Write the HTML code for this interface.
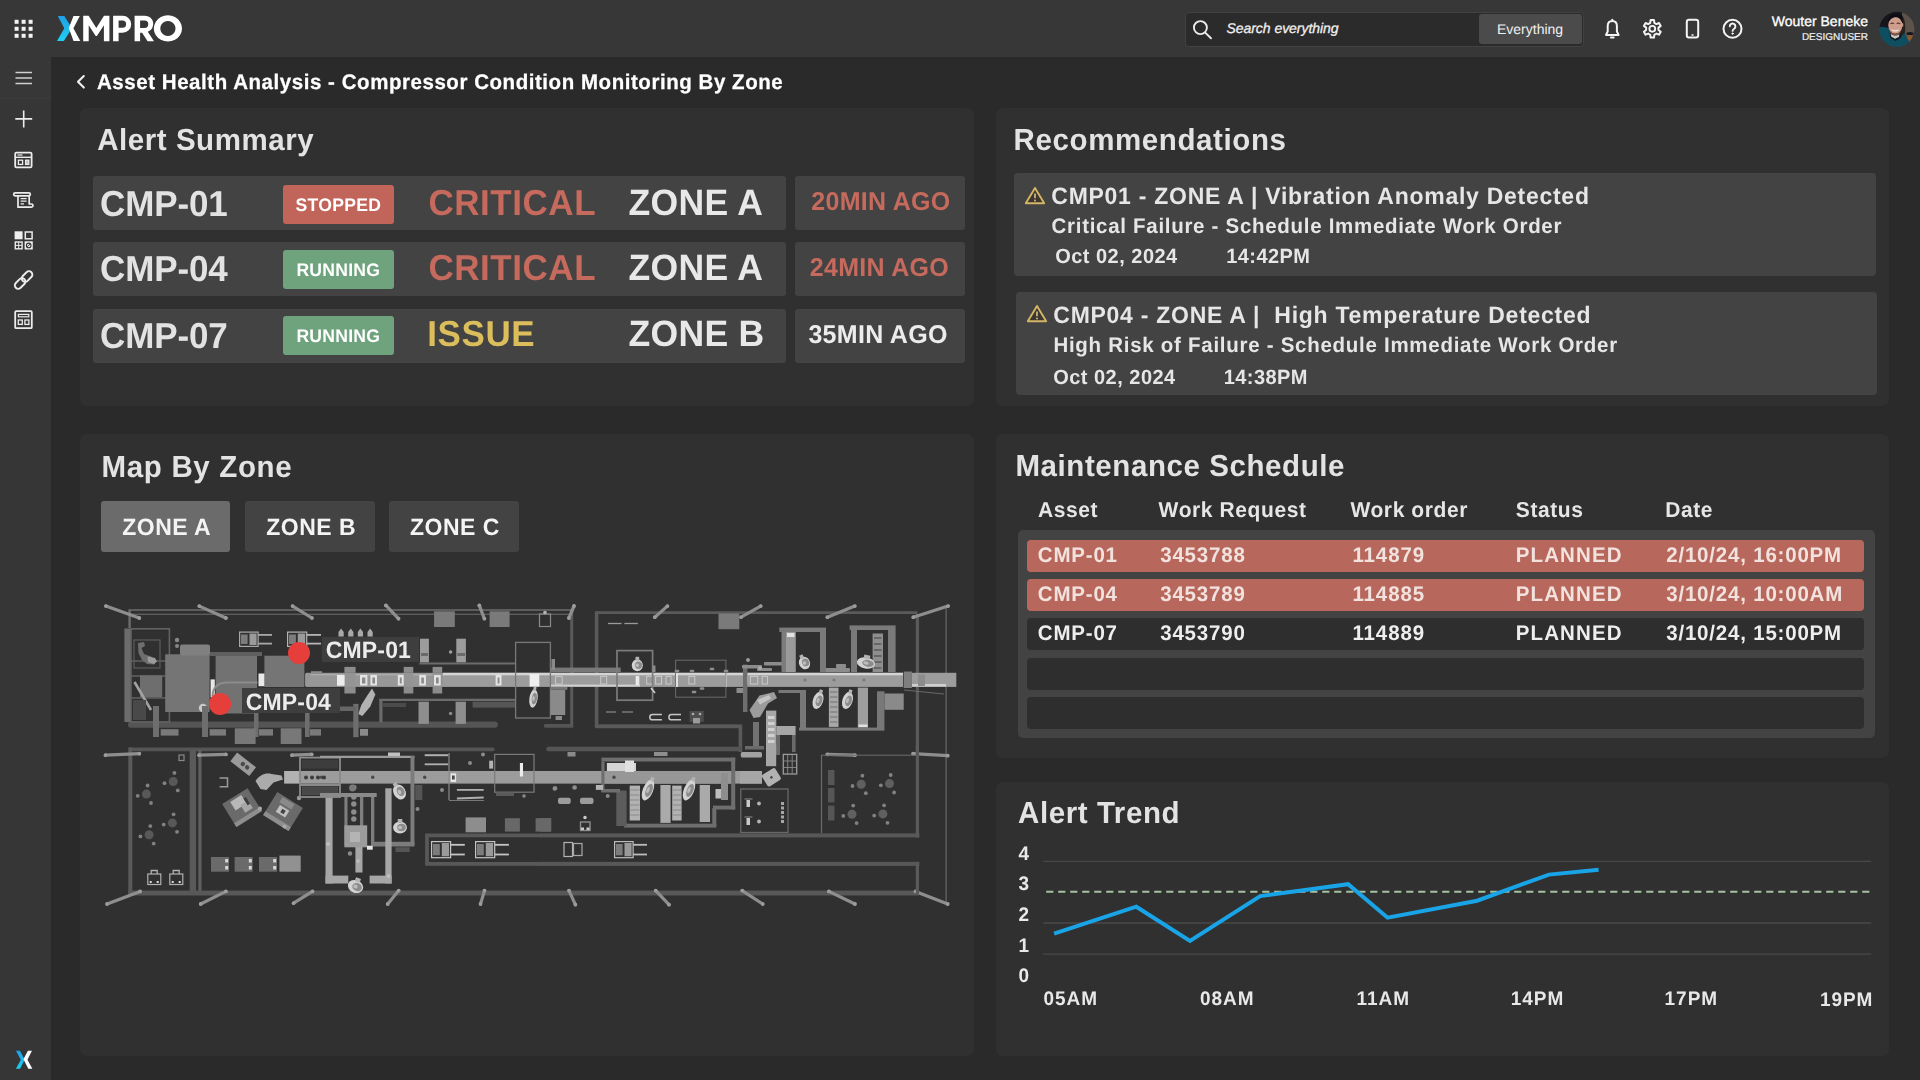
<!DOCTYPE html>
<html lang="en">
<head>
<meta charset="utf-8">
<title>Asset Health Analysis - Compressor Condition Monitoring By Zone</title>
<style>
*{box-sizing:border-box;margin:0;padding:0}
html,body{width:1920px;height:1080px;overflow:hidden;background:#2a2a2a}
body{font-family:"Liberation Sans",sans-serif;color:#e6e6e6;position:relative}
.abs{position:absolute}
.t{position:absolute;white-space:pre;line-height:1;transform:scaleY(1.03);transform-origin:0 85%;text-rendering:geometricPrecision}
.b{font-weight:700}
#topbar .t,#topbar{transform:none}
#topbar{left:0;top:0;width:1920px;height:57px;background:#373737}
#sidebar{left:0;top:57px;width:51px;height:1023px;background:#363636}
.panel{position:absolute;background:#303030;border-radius:7px}
</style>
</head>
<body>
<!-- TOPBAR -->
<div id="topbar" class="abs">
<!-- app grid -->
<svg class="abs" style="left:14px;top:19px" width="20" height="20" viewBox="0 0 20 20" fill="#f2f2f2">
<rect x=".6" y=".8" width="4" height="4"/><rect x="7.6" y=".8" width="4" height="4"/><rect x="14.6" y=".8" width="4" height="4"/>
<rect x=".6" y="7.8" width="4" height="4"/><rect x="7.6" y="7.8" width="4" height="4"/><rect x="14.6" y="7.8" width="4" height="4"/>
<rect x=".6" y="14.8" width="4" height="4"/><rect x="7.6" y="14.8" width="4" height="4"/><rect x="14.6" y="14.8" width="4" height="4"/>
</svg>
<!-- logo -->
<svg class="abs" style="left:56px;top:14px" width="130" height="30" viewBox="0 0 130 30">
<defs><linearGradient id="xg" x1="0" y1="0" x2="0" y2="1"><stop offset="0" stop-color="#1e9fe8"/><stop offset="1" stop-color="#1fd0f2"/></linearGradient></defs>
<path d="M1.8 1.9h6.500L16 14.200 7.800 27h-6.800L8.300 14.300z" fill="url(#xg)"/>
<path d="M23.800 1.900h-6.300L12.800 14.100 17.500 27h6.800L17.400 14.200z" fill="#fff"/>
<path d="M27.2 27.2V1.7h5.4l7.7 12.3 7.7-12.3h5.4v25.5h-5.5V11.2l-7 10.9h-1.2l-7-10.9v16z" fill="#fff"/>
<path fill-rule="evenodd" d="M57.1 27.2V1.7h9.6a8.5 8.5 0 0 1 0 17h-4.1v8.5zM62.6 6.6v7.2h3.9a3.6 3.6 0 0 0 0-7.2z" fill="#fff"/>
<path fill-rule="evenodd" d="M78.6 27.2V1.7h10.3a8.3 8.3 0 0 1 2.9 16.1l6.2 9.4h-6.4l-5.5-8.5h-2v8.5zM84.1 6.6v7.3h4.5a3.65 3.65 0 0 0 0-7.3z" fill="#fff"/>
<path fill-rule="evenodd" d="M111.9 1.3a14.1 13.15 0 1 0 .01 0zM111.9 6.9a7.6 7.55 0 1 1-.01 0z" fill="#fff"/>
</svg>
<!-- search -->
<div class="abs" style="left:1185px;top:11.5px;width:398.5px;height:35px;background:#2b2b2b;border:1px solid #424242;border-radius:4px"></div>
<svg class="abs" style="left:1190px;top:17px" width="26" height="26" viewBox="0 0 26 26" fill="none" stroke="#ececec" stroke-width="1.9" stroke-linecap="round"><circle cx="10.4" cy="10.6" r="6.5"/><path d="M15.2 15.6L21 21.3"/></svg>
<div class="t" style="left:1226.5px;top:20.500px;font-size:14px;font-style:italic;color:#f0f0f0;letter-spacing:-.05px;-webkit-text-stroke:.3px #f0f0f0">Search everything</div>
<div class="abs" style="left:1478.5px;top:14px;width:103.5px;height:30px;background:#4b4b4b;border-radius:3px"></div>
<div class="t" style="left:1497px;top:21.5px;font-size:14px;color:#f0f0f0">Everything</div>
<!-- bell -->
<svg class="abs" style="left:1595px;top:8px" width="160" height="42" viewBox="1595 8 160 42" fill="none" stroke="#f4f4f4" stroke-width="2" stroke-linejoin="round" stroke-linecap="round">
<path d="M1612.3 20.9c-3 0-4.600 2.300-4.600 5.200v5.400l-1.700 3.400h12.600l-1.700-3.400v-5.400c0-2.900-1.600-5.200-4.600-5.200z"/><path d="M1612.300 19.600v1" stroke-width="1.800"/><path d="M1611 37.500h2.600" stroke-width="2.200"/>
<path d="M1650.25 22.84L1650.60 20.06L1654.00 20.06L1654.35 22.84L1656.43 24.05L1659.02 22.96L1660.72 25.90L1658.48 27.60L1658.48 30.00L1660.72 31.70L1659.02 34.64L1656.43 33.55L1654.35 34.76L1654.00 37.54L1650.60 37.54L1650.25 34.76L1648.17 33.55L1645.58 34.64L1643.88 31.70L1646.12 30.00L1646.12 27.60L1643.88 25.90L1645.58 22.96L1648.17 24.05z" stroke-width="2"/><circle cx="1652.3" cy="28.8" r="2.900" stroke-width="1.900"/>
<rect x="1686.800" y="19.800" width="11.400" height="17.600" rx="2.200"/><path d="M1692 35h1" stroke-width="1.500"/>
<circle cx="1732.500" cy="28.800" r="9"/><path d="M1729.800 26.300a2.800 2.800 0 1 1 4.300 2.400c-1 .7-1.500 1.100-1.500 2.200" stroke-width="1.900"/><circle cx="1732.600" cy="33.600" r=".7" fill="#f4f4f4" stroke-width="1"/>
</svg>
<!-- user -->
<div class="t" style="right:52px;top:14px;font-size:14px;color:#fff;-webkit-text-stroke:.3px #fff">Wouter Beneke</div>
<div class="t" style="right:52px;top:32.5px;font-size:10px;color:#f0f0f0;-webkit-text-stroke:.2px #f0f0f0">DESIGNUSER</div>
<svg class="abs" style="left:1878px;top:11px" width="38" height="37" viewBox="0 0 38 37"><defs><clipPath id="av"><circle cx="18.9" cy="18.3" r="17.5"/></clipPath><filter id="bl" x="-20%" y="-20%" width="140%" height="140%"><feGaussianBlur stdDeviation=".7"/></filter></defs>
<g clip-path="url(#av)"><g filter="url(#bl)"><rect x="-2" y="-2" width="42" height="41" fill="#15171a"/><path d="M24 -2h16v41H24z" fill="#5d534c"/><path d="M24 4c4 6 4 14 2 22l-4 2z" fill="#26221f"/><ellipse cx="32" cy="28" rx="3.2" ry="4" fill="#8a5a2c"/><ellipse cx="32" cy="22.5" rx="3.6" ry="1.6" fill="#15171a"/>
<path d="M-2 16.5c5-.8 9-.4 12.5.4l2 7 8 4.5 6-6.5 5 9 1 9H-2z" fill="#0d5061"/>
<path d="M11.5 22l6 6 6.5-5.5-1 4-5.5 3.5-5-3z" fill="#0a1a22"/>
<path d="M12.5 22.5c2 2 6.5 2.6 9 .4l-.6 3.2-4 1.6-3.6-2z" fill="#cfc4be"/>
<ellipse cx="17.3" cy="14.2" rx="7" ry="8.8" fill="#cf9d8b"/><ellipse cx="24.3" cy="14" rx="1.1" ry="2" fill="#c99684"/>
<path d="M9.6 13.5c-.8-9 5-11.500 9-11.200 4.500 .3 7 3.500 6 10.200-1.500-5-4-6.300-7-6.300s-6.500 2-8 7.300z" fill="#101114"/>
<path d="M12.500 12.800c1.200-.8 2.600-.8 3.600-.2M18.600 12.600c1-.6 2.400-.6 3.600 .2" stroke="#5a3a2e" stroke-width="1.100" fill="none"/>
<path d="M13.300 18c2.200 1.600 5.800 1.600 8 0-.4 3.400-7.600 3.400-8 0z" fill="#f0e6e2"/>
<path d="M11 18c.8 5 4 6.600 6.300 6.600s5.600-1.600 6.400-6.600c-1 3.600-3.600 4.400-6.400 4.400s-5.300-.8-6.300-4.400z" fill="#7a5448"/>
</g></g></svg>
</div>
<!-- SIDEBAR -->
<div id="sidebar" class="abs">
<div class="abs" style="left:0;top:0;width:51px;height:42px;background:#373737;border-bottom:1px solid #3c3c3c"></div>
<svg class="abs" style="left:0;top:0" width="51" height="300" viewBox="0 57 51 300" fill="none" stroke="#ececec" stroke-width="1.5">
<!-- hamburger -->
<path d="M15.5 72.6H32M15.5 78H32M15.5 83.4H32" stroke="#cfcfcf"/>
<!-- plus -->
<path d="M15.3 118.9H32.2M23.7 110.4V127.4" stroke-width="1.6"/>
<!-- dashboard -->
<rect x="15.2" y="152.6" width="16.4" height="14.8" rx="1.2" stroke-width="1.8"/><path d="M15.2 157.3H31.8" stroke-width="1.4"/><path d="M17.5 155h5" stroke-width="1.2"/><rect x="18.4" y="160.2" width="4.2" height="4.2" stroke-width="1.3"/><rect x="25.6" y="160.2" width="3.2" height="4.2" stroke-width="1.3" fill="#bbb"/>
<!-- scroll -->
<path d="M15.2 192.8h13.6a1.5 1.5 0 0 1 0 3h-1.6M18 195.8V207.2H31.4a1.6 1.6 0 0 0 0-3.2H29.2V195.8M15.2 192.8a1.5 1.5 0 0 0 0 3H27.2" stroke-width="1.7" stroke-linejoin="round"/><path d="M20.6 198.6h6M20.6 201.2h6M20.6 203.8h3.4" stroke-width="1.3"/>
<!-- 4 squares -->
<rect x="14.6" y="231.3" width="8" height="8" fill="#efefef" stroke="none"/><rect x="25.3" y="232" width="6.8" height="6.8" stroke-width="1.5"/><rect x="15.3" y="242" width="6.8" height="6.8" stroke-width="1.4"/><path d="M18.7 242v6.8M15.3 245.4h6.8" stroke-width="1"/><rect x="24.6" y="241.3" width="8.2" height="8.2" fill="#efefef" stroke="none"/><circle cx="28.7" cy="245.4" r="2.3" stroke="#363636" stroke-width="1.1"/><path d="M27.2 246.9l3-3" stroke="#363636" stroke-width="1"/>
<!-- link -->
<g transform="rotate(-45 23.6 280)" stroke-width="1.9"><rect x="12.6" y="276.6" width="12.2" height="6.8" rx="3.4"/><rect x="22.4" y="276.6" width="12.2" height="6.8" rx="3.4"/></g>
<!-- widget -->
<rect x="15.2" y="311.2" width="16.6" height="17" rx="1" stroke-width="1.8"/><rect x="18.4" y="314.4" width="10.4" height="2.4" stroke-width="1.2"/><rect x="18.3" y="320" width="4" height="4.4" stroke-width="1.3"/><rect x="24.9" y="320" width="4" height="4.4" stroke-width="1.3"/>
</svg>
<!-- bottom X -->
<svg class="abs" style="left:13.500px;top:991px" width="21.400" height="23.500" viewBox="0 0 20 22">
<path d="M1.8 2.6h3.8l4.4 8.4-4.4 8.4H1.8l4.6-8.4z" fill="url(#xg)"/><path d="M16.8 2.6H13l-4.2 7.9 .3 .5 4.3 8.4h3.8l-4.6-8.4z" fill="#fff"/></svg>
</div>
<!-- TITLE -->
<svg class="abs" style="left:74px;top:73px" width="14" height="18" viewBox="0 0 14 18" fill="none" stroke="#f0f0f0" stroke-width="2.1" stroke-linecap="round" stroke-linejoin="round"><path d="M9.800 3L4 8.800l5.800 5.800"/></svg>
<div class="t b" id="title" style="left:97px;top:73px;font-size:20.5px;letter-spacing:.545px;color:#fff;-webkit-text-stroke:.25px #fff">Asset Health Analysis - Compressor Condition Monitoring By Zone</div>
<!-- PANELS -->
<div class="panel" style="left:80px;top:108px;width:894px;height:298px"></div>
<div class="panel" style="left:996px;top:108px;width:893px;height:298px"></div>
<div class="panel" style="left:80px;top:434px;width:894px;height:622px"></div>
<div class="panel" style="left:996px;top:434px;width:893px;height:323.5px"></div>
<div class="panel" style="left:996px;top:782px;width:893px;height:274px"></div>
<!-- ALERT SUMMARY -->
<div class="t " style="left:97.2px;top:126px;font-size:29.5px;font-weight:700;color:#e3e3e3;letter-spacing:0.55px;">Alert Summary</div>
<div class="abs" style="left:92.5px;top:176px;width:693.7px;height:54px;background:#434343;border-radius:3px;"></div>
<div class="abs" style="left:795.4px;top:176px;width:169.2px;height:54px;background:#434343;border-radius:3px;"></div>
<div class="t " style="left:100.1px;top:187px;font-size:35px;font-weight:700;color:#e2e2e2;letter-spacing:-0.15px;">CMP-01</div>
<div class="abs" style="left:282.5px;top:185px;width:111.7px;height:39.4px;background:#c1655a;border-radius:3px;"></div>
<div class="t" style="left:282.5px;width:111.7px;text-align:center;top:197px;font-size:17.6px;font-weight:700;color:#fff;letter-spacing:.25px">STOPPED</div>
<div class="t " style="left:428.4px;top:186px;font-size:35px;font-weight:700;color:#c56a5d;letter-spacing:0.55px;">CRITICAL</div>
<div class="t " style="left:628.6px;top:186px;font-size:35.6px;font-weight:700;color:#e8e8e8;letter-spacing:0.25px;">ZONE A</div>
<div class="t " style="left:811.3px;top:190px;font-size:25px;font-weight:700;color:#c56a5d;letter-spacing:0.3px;">20MIN AGO</div>
<div class="abs" style="left:92.5px;top:242.2px;width:693.7px;height:54px;background:#434343;border-radius:3px;"></div>
<div class="abs" style="left:795.4px;top:242.2px;width:169.2px;height:54px;background:#434343;border-radius:3px;"></div>
<div class="t " style="left:100.1px;top:252px;font-size:35px;font-weight:700;color:#e2e2e2;letter-spacing:-0.15px;">CMP-04</div>
<div class="abs" style="left:282.5px;top:249.6px;width:111.7px;height:39.4px;background:#6ea37e;border-radius:3px;"></div>
<div class="t" style="left:282.5px;width:111.7px;text-align:center;top:262px;font-size:17.6px;font-weight:700;color:#fff;letter-spacing:.25px">RUNNING</div>
<div class="t " style="left:428.4px;top:251px;font-size:35px;font-weight:700;color:#c56a5d;letter-spacing:0.55px;">CRITICAL</div>
<div class="t " style="left:628.6px;top:251px;font-size:35.6px;font-weight:700;color:#e8e8e8;letter-spacing:0.25px;">ZONE A</div>
<div class="t " style="left:809.8px;top:256px;font-size:25px;font-weight:700;color:#c56a5d;letter-spacing:0.3px;">24MIN AGO</div>
<div class="abs" style="left:92.5px;top:308.6px;width:693.7px;height:54px;background:#434343;border-radius:3px;"></div>
<div class="abs" style="left:795.4px;top:308.6px;width:169.2px;height:54px;background:#434343;border-radius:3px;"></div>
<div class="t " style="left:100.1px;top:319px;font-size:35px;font-weight:700;color:#e2e2e2;letter-spacing:-0.15px;">CMP-07</div>
<div class="abs" style="left:282.5px;top:315.6px;width:111.7px;height:39.4px;background:#6ea37e;border-radius:3px;"></div>
<div class="t" style="left:282.5px;width:111.7px;text-align:center;top:328px;font-size:17.6px;font-weight:700;color:#fff;letter-spacing:.25px">RUNNING</div>
<div class="t " style="left:427.2px;top:317px;font-size:35px;font-weight:700;color:#dcbd5c;letter-spacing:0.6px;">ISSUE</div>
<div class="t " style="left:628.6px;top:317px;font-size:35.6px;font-weight:700;color:#e8e8e8;letter-spacing:0.25px;">ZONE B</div>
<div class="t " style="left:808.4px;top:323px;font-size:25px;font-weight:700;color:#ececec;letter-spacing:0.3px;">35MIN AGO</div>
<!-- RECOMMENDATIONS -->
<div class="t " style="left:1013.6px;top:126px;font-size:29.5px;font-weight:700;color:#e3e3e3;letter-spacing:0.6px;">Recommendations</div>
<div class="abs" style="left:1013.8px;top:172.5px;width:862.2px;height:103.2px;background:#434343;border-radius:4px;"></div>
<svg class="abs" style="left:1023.7px;top:186.2px" width="22" height="19" viewBox="0 0 22 19" fill="none"><path d="M11 1.9L20.2 17.2H1.8z" stroke="#d3b566" stroke-width="1.9" stroke-linejoin="round" fill="#3d372f"/><path d="M11 7.6v4.600" stroke="#d9c58e" stroke-width="1.600"/><circle cx="11" cy="14.500" r=".9" fill="#d9c58e"/></svg>
<div class="t " style="left:1051.3px;top:185px;font-size:23px;font-weight:700;color:#e6e6e6;letter-spacing:0.73px;">CMP01 - ZONE A | Vibration Anomaly Detected</div>
<div class="t " style="left:1051.6px;top:217px;font-size:20.5px;font-weight:700;color:#e6e6e6;letter-spacing:0.7px;">Critical Failure - Schedule Immediate Work Order</div>
<div class="t " style="left:1055.2px;top:247px;font-size:20px;font-weight:700;color:#e6e6e6;letter-spacing:0.48px;">Oct 02, 2024</div>
<div class="t " style="left:1226.3px;top:247px;font-size:20px;font-weight:700;color:#e6e6e6;letter-spacing:0.4px;">14:42PM</div>
<div class="abs" style="left:1016.3px;top:291.8px;width:861.2px;height:102.8px;background:#434343;border-radius:4px;"></div>
<svg class="abs" style="left:1025.8px;top:304.4px" width="22" height="19" viewBox="0 0 22 19" fill="none"><path d="M11 1.9L20.2 17.2H1.8z" stroke="#d3b566" stroke-width="1.9" stroke-linejoin="round" fill="#3d372f"/><path d="M11 7.6v4.600" stroke="#d9c58e" stroke-width="1.600"/><circle cx="11" cy="14.500" r=".9" fill="#d9c58e"/></svg>
<div class="t " style="left:1053.3px;top:304px;font-size:23px;font-weight:700;color:#e6e6e6;letter-spacing:0.73px;">CMP04 - ZONE A |  High Temperature Detected</div>
<div class="t " style="left:1053.4px;top:336px;font-size:20.5px;font-weight:700;color:#e6e6e6;letter-spacing:0.72px;">High Risk of Failure - Schedule Immediate Work Order</div>
<div class="t " style="left:1053.2px;top:368px;font-size:20px;font-weight:700;color:#e6e6e6;letter-spacing:0.48px;">Oct 02, 2024</div>
<div class="t " style="left:1223.8px;top:368px;font-size:20px;font-weight:700;color:#e6e6e6;letter-spacing:0.4px;">14:38PM</div>
<!-- MAP BY ZONE -->
<div class="t " style="left:101.6px;top:453px;font-size:29.5px;font-weight:700;color:#e3e3e3;letter-spacing:0.65px;">Map By Zone</div>
<div class="abs" style="left:100.8px;top:501.3px;width:129.7px;height:51.2px;background:#6b6b6b;border-radius:3px;"></div>
<div class="t " style="left:122.2px;top:516px;font-size:23px;font-weight:700;color:#f4f4f4;letter-spacing:0.5px;">ZONE A</div>
<div class="abs" style="left:245px;top:501.3px;width:129.5px;height:51.2px;background:#434343;border-radius:3px;"></div>
<div class="t " style="left:266.2px;top:516px;font-size:23px;font-weight:700;color:#f4f4f4;letter-spacing:0.5px;">ZONE B</div>
<div class="abs" style="left:389px;top:501.3px;width:129.8px;height:51.2px;background:#434343;border-radius:3px;"></div>
<div class="t " style="left:410px;top:516px;font-size:23px;font-weight:700;color:#f4f4f4;letter-spacing:0.5px;">ZONE C</div>
<svg class="abs" style="left:100px;top:595px" width="870" height="325" viewBox="100 595 870 325" fill="none"><defs><filter id="mb" x="0" y="0" width="100%" height="100%"><feGaussianBlur stdDeviation=".45"/></filter></defs><g filter="url(#mb)">
<path d="M128.5 610.0L571.5 610.0" stroke="#6c6c6c" stroke-width="1.3"/>
<path d="M131.0 614.2L571.5 614.2" stroke="#6c6c6c" stroke-width="1.1"/>
<path d="M129.6 610.0L129.6 628.0" stroke="#6c6c6c" stroke-width="2.4"/>
<path d="M596.0 612.6L917.5 612.6" stroke="#5a5a5a" stroke-width="2.6"/>
<rect x="570.2" y="611.0" width="3.0" height="116.6" fill="#5a5a5a"/>
<rect x="594.8" y="611.3" width="3.6" height="116.5" fill="#5a5a5a"/>
<rect x="915.8" y="614.0" width="3.2" height="141.0" fill="#5a5a5a"/>
<path d="M946.1 608.0L946.1 904.0" stroke="#6c6c6c" stroke-width="1.1"/>
<rect x="128.0" y="721.6" width="369.8" height="6.2" fill="#545454" rx="3"/>
<rect x="543.7" y="723.9" width="28.3" height="3.9" fill="#555" rx="2"/>
<rect x="596.0" y="724.4" width="146.2" height="3.8" fill="#5a5a5a"/>
<rect x="738.6" y="728.0" width="3.6" height="24.0" fill="#5a5a5a"/>
<rect x="128.9" y="747.4" width="365.8" height="3.9" fill="#555" rx="2"/>
<rect x="546.3" y="746.8" width="195.1" height="4.5" fill="#555" rx="2"/>
<path d="M105.9 606.1L139.3 618.0" stroke="#8e8e8e" stroke-width="3.2" stroke-linecap="round"/>
<circle cx="105.9" cy="606.1" r="1.9" fill="#9c9c9c"/>
<circle cx="139.3" cy="618.0" r="1.9" fill="#9c9c9c"/>
<path d="M199.3 606.1L225.9 618.0" stroke="#8e8e8e" stroke-width="3.2" stroke-linecap="round"/>
<circle cx="199.3" cy="606.1" r="1.9" fill="#9c9c9c"/>
<circle cx="225.9" cy="618.0" r="1.9" fill="#9c9c9c"/>
<path d="M292.6 606.1L311.9 618.0" stroke="#8e8e8e" stroke-width="3.2" stroke-linecap="round"/>
<circle cx="292.6" cy="606.1" r="1.9" fill="#9c9c9c"/>
<circle cx="311.9" cy="618.0" r="1.9" fill="#9c9c9c"/>
<path d="M385.9 605.4L398.5 618.7" stroke="#8e8e8e" stroke-width="3.2" stroke-linecap="round"/>
<circle cx="385.9" cy="605.4" r="1.9" fill="#9c9c9c"/>
<circle cx="398.5" cy="618.7" r="1.9" fill="#9c9c9c"/>
<path d="M479.3 605.4L484.4 618.7" stroke="#8e8e8e" stroke-width="3.2" stroke-linecap="round"/>
<circle cx="479.3" cy="605.4" r="1.9" fill="#9c9c9c"/>
<circle cx="484.4" cy="618.7" r="1.9" fill="#9c9c9c"/>
<path d="M574.0 606.0L568.9 618.0" stroke="#8e8e8e" stroke-width="3.2" stroke-linecap="round"/>
<circle cx="574.0" cy="606.0" r="1.9" fill="#9c9c9c"/>
<circle cx="568.9" cy="618.0" r="1.9" fill="#9c9c9c"/>
<path d="M667.4 606.1L654.8 617.2" stroke="#8e8e8e" stroke-width="3.2" stroke-linecap="round"/>
<circle cx="667.4" cy="606.1" r="1.9" fill="#9c9c9c"/>
<circle cx="654.8" cy="617.2" r="1.9" fill="#9c9c9c"/>
<path d="M760.7 606.1L741.0 617.2" stroke="#8e8e8e" stroke-width="3.2" stroke-linecap="round"/>
<circle cx="760.7" cy="606.1" r="1.9" fill="#9c9c9c"/>
<circle cx="741.0" cy="617.2" r="1.9" fill="#9c9c9c"/>
<path d="M854.8 606.1L827.4 617.2" stroke="#8e8e8e" stroke-width="3.2" stroke-linecap="round"/>
<circle cx="854.8" cy="606.1" r="1.9" fill="#9c9c9c"/>
<circle cx="827.4" cy="617.2" r="1.9" fill="#9c9c9c"/>
<path d="M948.1 606.1L913.3 617.2" stroke="#8e8e8e" stroke-width="3.2" stroke-linecap="round"/>
<circle cx="948.1" cy="606.1" r="1.9" fill="#9c9c9c"/>
<circle cx="913.3" cy="617.2" r="1.9" fill="#9c9c9c"/>
<rect x="124.4" y="628.5" width="6.6" height="93.5" fill="#6c6c6c"/>
<rect x="131.0" y="628.8" width="38.4" height="93.2" fill="none" stroke="#626262" stroke-width="1.6"/>
<path d="M131.0 661.0L169.0 661.0" stroke="#626262" stroke-width="1.4"/>
<path d="M131.0 676.0L169.0 676.0" stroke="#626262" stroke-width="1.4"/>
<path d="M131.0 698.0L169.0 698.0" stroke="#626262" stroke-width="1.4"/>
<rect x="140.0" y="675.4" width="22.2" height="21.8" fill="#6e6e6e"/>
<path d="M138 643l6-1 1 4-3.500 2 2.500 6 7 2.500 5 3.500-1.500 4.500-7.500-.5-5-4-3.500-7z" fill="#6e6e6e"/>
<path d="M147.500 656.500l7.500 1.500 2 3.500-3 2.500-6-2z" fill="#9c9c9c"/>
<rect x="134.0" y="640.0" width="26.0" height="28.0" fill="none" stroke="#5a5a5a" stroke-width="1.2"/>
<path d="M134.5 682.0L151.0 710.0" stroke="#a2a2a2" stroke-width="2.6"/>
<rect x="133.0" y="700.0" width="13.0" height="20.0" fill="#4a4a4a"/>
<rect x="165.2" y="654.3" width="44.4" height="57.7" fill="#757575"/>
<rect x="215.6" y="655.0" width="41.4" height="58.5" fill="#727272"/>
<rect x="264.4" y="655.7" width="40.0" height="31.3" fill="#747474"/>
<rect x="180.0" y="644.5" width="30.0" height="11.0" fill="#808080" rx="2"/>
<rect x="210.0" y="652.0" width="52.0" height="4.0" fill="#5e5e5e"/>
<circle cx="177.0" cy="640.0" r="2.2" fill="#888"/>
<circle cx="177.0" cy="646.0" r="2" fill="#888"/>
<rect x="210.6" y="679.4" width="4.2" height="18.0" fill="#e6e6e6"/>
<rect x="258.5" y="673.5" width="5.9" height="12.7" fill="#e9e9e9"/>
<rect x="305.5" y="673.5" width="5.5" height="12.7" fill="#e9e9e9"/>
<path d="M212.500 696c.5-9 6-13.500 15-13.500h30" stroke="#8c8c8c" stroke-width="1.800" fill="none"/>
<circle cx="203.0" cy="708.0" r="4.2" fill="#c9c9c9"/>
<rect x="153.0" y="706.0" width="6.0" height="31.0" fill="#6e6e6e"/>
<rect x="202.0" y="706.0" width="6.0" height="31.0" fill="#6e6e6e"/>
<rect x="254.0" y="706.0" width="4.5" height="31.0" fill="#6e6e6e"/>
<rect x="305.0" y="706.0" width="4.6" height="31.0" fill="#6e6e6e"/>
<rect x="160.7" y="729.2" width="17.8" height="6.4" fill="#7a7a7a"/>
<rect x="209.6" y="729.2" width="16.4" height="6.4" fill="#7a7a7a"/>
<rect x="259.0" y="729.2" width="14.0" height="6.4" fill="#7a7a7a"/>
<rect x="310.0" y="729.2" width="11.0" height="6.4" fill="#7a7a7a"/>
<rect x="234.8" y="728.3" width="20.8" height="15.7" fill="#787878"/>
<rect x="280.7" y="728.3" width="20.8" height="15.7" fill="#787878"/>
<rect x="239.6" y="632.1" width="18.5" height="14.3" fill="none" stroke="#a8a8a8" stroke-width="1.2"/>
<rect x="241.0" y="634.5" width="6.6" height="9.5" fill="#7c7c7c"/>
<rect x="249.5" y="633.5" width="7.1" height="11.5" fill="#9a9a9a"/>
<path d="M258.1 634.9L272.0 634.9" stroke="#a8a8a8" stroke-width="1.8"/>
<path d="M258.1 643.6L272.0 643.6" stroke="#a8a8a8" stroke-width="1.8"/>
<rect x="287.6" y="632.1" width="19.1" height="14.3" fill="none" stroke="#b4b4b4" stroke-width="1.2"/>
<rect x="289.0" y="634.5" width="6.9" height="9.5" fill="#7c7c7c"/>
<rect x="297.8" y="633.5" width="7.4" height="11.5" fill="#9a9a9a"/>
<path d="M306.7 634.9L321.0 634.9" stroke="#b4b4b4" stroke-width="1.8"/>
<path d="M306.7 643.6L321.0 643.6" stroke="#b4b4b4" stroke-width="1.8"/>
<path d="M338.5 636.5v-4.6l2.6-3.4 2.6 3.4v4.600z" fill="#a9a9a9"/>
<path d="M348.2 636.5v-4.6l2.6-3.4 2.6 3.4v4.600z" fill="#a9a9a9"/>
<path d="M357.8 636.5v-4.6l2.6-3.4 2.6 3.4v4.600z" fill="#a9a9a9"/>
<path d="M367.5 636.5v-4.6l2.6-3.4 2.6 3.4v4.600z" fill="#a9a9a9"/>
<rect x="434.1" y="611.3" width="20.7" height="15.7" fill="#7a7a7a"/>
<rect x="489.6" y="611.3" width="20.0" height="15.7" fill="#7a7a7a"/>
<rect x="718.5" y="613.5" width="20.8" height="15.7" fill="#7a7a7a"/>
<rect x="539.5" y="614.0" width="11.0" height="12.5" fill="none" stroke="#8a8a8a" stroke-width="1.2"/>
<circle cx="545.0" cy="612.5" r="1.8" fill="#b5b5b5"/>
<rect x="420.0" y="638.7" width="8.9" height="23.7" fill="#9c9c9c"/>
<rect x="456.3" y="638.7" width="9.6" height="23.7" fill="#9c9c9c"/>
<rect x="421.0" y="653.0" width="7.0" height="3.0" fill="#6a6a6a"/>
<rect x="457.3" y="653.0" width="7.7" height="3.0" fill="#6a6a6a"/>
<circle cx="450.6" cy="652.0" r="1.7" fill="#a0a0a0"/>
<path d="M419.3 663.5L515.6 663.5" stroke="#6c6c6c" stroke-width="2.2"/>
<rect x="305.9" y="672.8" width="137.1" height="14.1" fill="#979797"/>
<rect x="311.0" y="674.3" width="132.0" height="1.0" fill="#b4b4b4"/>
<rect x="311.0" y="671.2" width="11.0" height="2.8" fill="#8c8c8c"/>
<rect x="443.0" y="672.8" width="460.0" height="14.1" fill="#9c9c9c"/>
<rect x="443.0" y="672.8" width="460.0" height="2.5" fill="#d4d4d4"/>
<rect x="551.0" y="684.6" width="89.0" height="2.0" fill="#cfcfcf"/>
<rect x="903.7" y="671.5" width="8.2" height="16.5" fill="#7e7e7e"/>
<rect x="911.9" y="672.8" width="44.4" height="14.1" fill="#9c9c9c"/>
<rect x="912.0" y="684.0" width="34.0" height="2.6" fill="#cfcfcf"/>
<rect x="918.0" y="674.5" width="7.0" height="11.5" fill="#8c8c8c"/>
<rect x="344.4" y="666.9" width="11.2" height="5.9" fill="#8c8c8c"/>
<rect x="344.4" y="686.9" width="11.2" height="6.6" fill="#8c8c8c"/>
<rect x="344.4" y="672.8" width="11.2" height="14.1" fill="#949494"/>
<rect x="403.7" y="666.9" width="9.6" height="5.9" fill="#8c8c8c"/>
<rect x="403.7" y="686.9" width="9.6" height="6.6" fill="#8c8c8c"/>
<rect x="403.7" y="672.8" width="9.6" height="14.1" fill="#949494"/>
<rect x="432.6" y="666.9" width="9.6" height="5.9" fill="#8c8c8c"/>
<rect x="432.6" y="686.9" width="9.6" height="6.6" fill="#8c8c8c"/>
<rect x="432.6" y="672.8" width="9.6" height="14.1" fill="#949494"/>
<rect x="337.0" y="675.0" width="7.4" height="10.5" fill="#e4e4e4"/>
<rect x="339.0" y="677.5" width="3.4" height="6.0" fill="#8a8a8a"/>
<rect x="360.0" y="675.0" width="7.4" height="10.5" fill="#e4e4e4"/>
<rect x="362.0" y="677.5" width="3.4" height="6.0" fill="#8a8a8a"/>
<rect x="370.4" y="675.0" width="6.6" height="10.5" fill="#e4e4e4"/>
<rect x="372.4" y="677.5" width="2.6" height="6.0" fill="#8a8a8a"/>
<rect x="397.8" y="675.0" width="5.9" height="10.5" fill="#e4e4e4"/>
<rect x="399.8" y="677.5" width="1.9" height="6.0" fill="#8a8a8a"/>
<rect x="419.3" y="675.0" width="6.6" height="10.5" fill="#e4e4e4"/>
<rect x="421.3" y="677.5" width="2.6" height="6.0" fill="#8a8a8a"/>
<rect x="434.0" y="675.0" width="6.7" height="10.5" fill="#e4e4e4"/>
<rect x="436.0" y="677.5" width="2.7" height="6.0" fill="#8a8a8a"/>
<rect x="495.6" y="675.0" width="5.9" height="10.5" fill="#e4e4e4"/>
<rect x="497.6" y="677.5" width="1.9" height="6.0" fill="#8a8a8a"/>
<rect x="337.0" y="675.0" width="7.4" height="10.5" fill="#ececec"/>
<rect x="529.6" y="674.0" width="9.7" height="12.5" fill="#efefef"/>
<rect x="555.6" y="676.4" width="6.6" height="7.6" fill="none" stroke="#c9c9c9" stroke-width="1"/>
<rect x="600.7" y="676.4" width="6.0" height="7.6" fill="none" stroke="#c9c9c9" stroke-width="1"/>
<rect x="646.7" y="676.4" width="5.9" height="7.6" fill="none" stroke="#c9c9c9" stroke-width="1"/>
<rect x="655.6" y="676.4" width="5.9" height="7.6" fill="none" stroke="#c9c9c9" stroke-width="1"/>
<rect x="666.0" y="676.4" width="5.1" height="7.6" fill="none" stroke="#c9c9c9" stroke-width="1"/>
<rect x="688.9" y="676.4" width="5.9" height="7.6" fill="none" stroke="#c9c9c9" stroke-width="1"/>
<rect x="743.7" y="676.4" width="3.7" height="7.6" fill="none" stroke="#c9c9c9" stroke-width="1"/>
<rect x="750.4" y="676.4" width="7.4" height="7.6" fill="none" stroke="#c9c9c9" stroke-width="1"/>
<rect x="762.2" y="676.4" width="5.2" height="7.6" fill="none" stroke="#c9c9c9" stroke-width="1"/>
<rect x="635.6" y="676.0" width="3.7" height="9.0" fill="#e9e9e9"/>
<rect x="675.6" y="673.0" width="2.2" height="14.0" fill="#efefef"/>
<rect x="725.2" y="673.0" width="1.8" height="14.0" fill="#efefef"/>
<circle cx="805.0" cy="680.0" r="1.6" fill="#7a7a7a"/>
<circle cx="834.0" cy="680.0" r="1.6" fill="#7a7a7a"/>
<circle cx="864.0" cy="680.0" r="1.6" fill="#7a7a7a"/>
<path d="M379.3 699.8L515.6 699.8" stroke="#6c6c6c" stroke-width="2.2"/>
<rect x="379.3" y="699.0" width="3.2" height="23.0" fill="#6a6a6a"/>
<rect x="418.5" y="701.7" width="10.4" height="22.2" fill="#8e8e8e"/>
<rect x="455.6" y="701.7" width="10.3" height="22.2" fill="#8e8e8e"/>
<rect x="472.6" y="701.7" width="43.0" height="5.9" fill="#565656"/>
<rect x="383.0" y="703.0" width="23.0" height="4.0" fill="#4c4c4c"/>
<circle cx="450.6" cy="713.5" r="1.7" fill="#8a8a8a"/>
<rect x="515.6" y="642.4" width="34.8" height="75.6" fill="none" stroke="#787878" stroke-width="1.3"/>
<g transform="translate(533.5 698.5) rotate(8)"><ellipse rx="4.1" ry="9.2" fill="#d2d2d2"/><ellipse rx="2.6" ry="5.8" cx="0.9" fill="#8c8c8c"/><ellipse rx="1.2" ry="2.6" fill="#bdbdbd"/><rect x="-1.4" y="-11.7" width="2.8" height="4" fill="#b4b4b4"/></g>
<rect x="550.4" y="689.8" width="14.8" height="25.2" fill="#8a8a8a"/>
<rect x="555.6" y="716.0" width="6.4" height="4.0" fill="#8c8c8c"/>
<rect x="550.4" y="667.6" width="70.3" height="4.4" fill="#787878"/>
<rect x="550.4" y="686.9" width="17.0" height="2.9" fill="#787878"/>
<rect x="551.5" y="659.0" width="3.5" height="11.0" fill="#8a8a8a"/>
<path d="M372 688.500l3.300 6-5 12-8 9.500-4-2 3-9 6-9.500z" fill="#b2b2b2"/>
<rect x="353.3" y="703.9" width="5.2" height="33.3" fill="#6e6e6e"/>
<rect x="339.0" y="706.5" width="17.0" height="4.5" fill="#666"/>
<rect x="360.0" y="729.0" width="8.0" height="6.7" fill="#8a8a8a"/>
<rect x="617.0" y="650.6" width="35.6" height="49.6" fill="none" stroke="#7c7c7c" stroke-width="1.7"/>
<g transform="translate(637.3 665.3) rotate(0)"><ellipse rx="5.5" ry="6.0" fill="#d2d2d2"/><ellipse rx="3.5" ry="3.7" cx="1.2" fill="#8c8c8c"/><ellipse rx="1.6" ry="1.7" fill="#bdbdbd"/><rect x="-1.8" y="-8.5" width="3.7" height="4" fill="#b4b4b4"/></g>
<rect x="652.6" y="665.5" width="2.9" height="6.5" fill="#8a8a8a"/>
<path d="M651.0 688.0L655.0 693.0" stroke="#d0d0d0" stroke-width="1.6"/>
<rect x="675.6" y="660.2" width="50.3" height="37.0" fill="none" stroke="#6a6a6a" stroke-width="1"/>
<rect x="674.7" y="669.7" width="4.6" height="2.6" fill="#8e8e8e" rx="1"/>
<rect x="689.7" y="669.7" width="4.6" height="2.6" fill="#8e8e8e" rx="1"/>
<rect x="709.7" y="667.7" width="4.6" height="2.6" fill="#8e8e8e" rx="1"/>
<rect x="723.7" y="669.7" width="4.6" height="2.6" fill="#8e8e8e" rx="1"/>
<rect x="691.7" y="690.7" width="4.6" height="2.6" fill="#8e8e8e" rx="1"/>
<rect x="699.7" y="687.2" width="4.6" height="2.6" fill="#8e8e8e" rx="1"/>
<path d="M608.0 623.5L621.5 623.5" stroke="#9a9a9a" stroke-width="1.3"/>
<path d="M624.4 623.5L637.8 623.5" stroke="#9a9a9a" stroke-width="1.3"/>
<path d="M606.0 712.0L616.0 712.0" stroke="#8a8a8a" stroke-width="1.2"/>
<path d="M622.0 712.0L633.0 712.0" stroke="#8a8a8a" stroke-width="1.2"/>
<path d="M661.9 714.600h-9.500a2.600 2.600 0 0 0 0 5.200h9.500" fill="none" stroke="#c6c6c6" stroke-width="1.500"/>
<path d="M681.0 714.600h-9.500a2.600 2.600 0 0 0 0 5.200h9.500" fill="none" stroke="#c6c6c6" stroke-width="1.500"/>
<rect x="689.6" y="711.0" width="14.1" height="11.0" fill="#4e4e4e"/>
<rect x="693.0" y="718.0" width="7.0" height="5.5" fill="#9a9a9a"/>
<circle cx="693.0" cy="714.0" r="1.3" fill="#aaa"/>
<circle cx="700.0" cy="714.0" r="1.3" fill="#aaa"/>
<rect x="736.5" y="688.0" width="7.5" height="5.0" fill="#8c8c8c"/>
<rect x="743.0" y="664.6" width="4.4" height="47.4" fill="#6e6e6e"/>
<rect x="742.0" y="665.0" width="20.0" height="3.5" fill="#8c8c8c" rx="1"/>
<rect x="757.0" y="668.0" width="15.0" height="3.0" fill="#8c8c8c" rx="1"/>
<rect x="764.0" y="662.0" width="20.0" height="3.5" fill="#8c8c8c" rx="1"/>
<rect x="820.0" y="668.0" width="30.0" height="4.0" fill="#8c8c8c" rx="1"/>
<rect x="836.0" y="664.0" width="10.0" height="4.0" fill="#8c8c8c" rx="1"/>
<circle cx="748.0" cy="660.0" r="2" fill="#9a9a9a"/>
<circle cx="760.0" cy="668.0" r="1.8" fill="#b0b0b0"/>
<rect x="779.3" y="627.6" width="46.7" height="4.4" fill="#7a7a7a"/>
<rect x="781.5" y="632.0" width="14.1" height="40.0" fill="#7c7c7c"/>
<rect x="786.0" y="632.0" width="9.6" height="40.0" fill="#9a9a9a"/>
<rect x="787.0" y="633.0" width="7.5" height="4.0" fill="#e2e2e2"/>
<rect x="820.0" y="632.0" width="6.0" height="40.0" fill="#7a7a7a"/>
<rect x="849.6" y="625.4" width="46.0" height="4.6" fill="#7a7a7a"/>
<rect x="851.0" y="630.0" width="6.0" height="42.0" fill="#7a7a7a"/>
<rect x="888.0" y="630.0" width="7.6" height="42.0" fill="#7a7a7a"/>
<rect x="872.6" y="633.5" width="10.4" height="38.5" fill="#8e8e8e"/>
<path d="M874.0 638.0L881.5 638.0" stroke="#555" stroke-width="1.4"/>
<path d="M874.0 644.0L881.5 644.0" stroke="#555" stroke-width="1.4"/>
<path d="M874.0 650.0L881.5 650.0" stroke="#555" stroke-width="1.4"/>
<path d="M874.0 656.0L881.5 656.0" stroke="#555" stroke-width="1.4"/>
<path d="M874.0 662.0L881.5 662.0" stroke="#555" stroke-width="1.4"/>
<path d="M874.0 668.0L881.5 668.0" stroke="#555" stroke-width="1.4"/>
<g transform="translate(804.5 663.0) rotate(-25)"><ellipse rx="5.5" ry="6.4" fill="#d2d2d2"/><ellipse rx="3.5" ry="4.0" cx="1.2" fill="#8c8c8c"/><ellipse rx="1.6" ry="1.8" fill="#bdbdbd"/><rect x="-1.8" y="-8.9" width="3.7" height="4" fill="#b4b4b4"/></g>
<g transform="translate(866.0 663.0) rotate(10)"><ellipse rx="9.2" ry="5.5" fill="#d2d2d2"/><ellipse rx="5.8" ry="3.5" cx="2.0" fill="#8c8c8c"/><ellipse rx="2.6" ry="1.6" fill="#bdbdbd"/><rect x="-3.1" y="-8.0" width="6.1" height="4" fill="#b4b4b4"/></g>
<rect x="778.5" y="690.0" width="27.5" height="3.0" fill="#787878"/>
<rect x="800.0" y="692.8" width="6.0" height="35.5" fill="#787878"/>
<rect x="799.0" y="727.6" width="85.4" height="3.0" fill="#787878"/>
<rect x="828.9" y="687.6" width="9.6" height="39.3" fill="#a8a8a8"/>
<path d="M830.0 692.0L837.5 692.0" stroke="#7a7a7a" stroke-width="1.2"/>
<path d="M830.0 697.0L837.5 697.0" stroke="#7a7a7a" stroke-width="1.2"/>
<path d="M830.0 702.0L837.5 702.0" stroke="#7a7a7a" stroke-width="1.2"/>
<path d="M830.0 707.0L837.5 707.0" stroke="#7a7a7a" stroke-width="1.2"/>
<path d="M830.0 712.0L837.5 712.0" stroke="#7a7a7a" stroke-width="1.2"/>
<path d="M830.0 717.0L837.5 717.0" stroke="#7a7a7a" stroke-width="1.2"/>
<path d="M830.0 722.0L837.5 722.0" stroke="#7a7a7a" stroke-width="1.2"/>
<rect x="857.8" y="687.6" width="10.2" height="40.0" fill="#9e9e9e"/>
<rect x="858.5" y="724.5" width="9.0" height="2.5" fill="#e0e0e0"/>
<g transform="translate(818.0 700.5) rotate(18)"><ellipse rx="5.1" ry="8.7" fill="#d2d2d2"/><ellipse rx="3.2" ry="5.5" cx="1.1" fill="#8c8c8c"/><ellipse rx="1.4" ry="2.5" fill="#bdbdbd"/><rect x="-1.7" y="-11.2" width="3.4" height="4" fill="#b4b4b4"/></g>
<g transform="translate(847.5 700.5) rotate(18)"><ellipse rx="5.1" ry="8.7" fill="#d2d2d2"/><ellipse rx="3.2" ry="5.5" cx="1.1" fill="#8c8c8c"/><ellipse rx="1.4" ry="2.5" fill="#bdbdbd"/><rect x="-1.7" y="-11.2" width="3.4" height="4" fill="#b4b4b4"/></g>
<rect x="884.4" y="693.5" width="19.3" height="16.3" fill="#8a8a8a"/>
<rect x="877.0" y="691.3" width="7.4" height="37.0" fill="#787878"/>
<path d="M904.0 690.0L944.0 694.0" stroke="#6a6a6a" stroke-width="1"/>
<path d="M749.500 710l10-14.500 14.500-3.500 3 6-9 5.500-8 13.500-6.500 1z" fill="#9c9c9c"/>
<path d="M757 700l12-5 2 3.500-11 6z" fill="#c4c4c4"/>
<rect x="753.0" y="722.0" width="6.0" height="26.0" fill="#727272"/>
<rect x="745.0" y="746.0" width="19.0" height="3.5" fill="#6a6a6a"/>
<rect x="766.0" y="710.6" width="10.3" height="44.4" fill="#a6a6a6"/>
<rect x="776.3" y="726.0" width="19.3" height="9.0" fill="#a6a6a6"/>
<rect x="768.0" y="716.0" width="6.5" height="3.0" fill="#d0d0d0"/>
<rect x="768.0" y="722.0" width="6.5" height="3.0" fill="#d0d0d0"/>
<rect x="768.0" y="728.0" width="6.5" height="3.0" fill="#d0d0d0"/>
<rect x="768.0" y="734.0" width="6.5" height="3.0" fill="#d0d0d0"/>
<rect x="768.0" y="740.0" width="6.5" height="3.0" fill="#d0d0d0"/>
<rect x="776.0" y="735.0" width="4.0" height="20.0" fill="#6a6a6a"/>
<rect x="792.0" y="735.0" width="3.6" height="17.0" fill="#6a6a6a"/>
<rect x="128.3" y="747.4" width="4.0" height="147.1" fill="#5a5a5a"/>
<rect x="189.7" y="750.0" width="6.3" height="144.0" fill="#5a5a5a"/>
<rect x="198.4" y="750.0" width="3.1" height="144.0" fill="#606060"/>
<rect x="128.3" y="890.6" width="790.7" height="4.9" fill="#585858"/>
<path d="M105.5 755.2L139.3 753.7" stroke="#8e8e8e" stroke-width="3.2" stroke-linecap="round"/>
<circle cx="105.5" cy="755.2" r="1.9" fill="#9c9c9c"/>
<circle cx="139.3" cy="753.7" r="1.9" fill="#9c9c9c"/>
<path d="M199.1 755.2L225.9 754.4" stroke="#8e8e8e" stroke-width="3.2" stroke-linecap="round"/>
<circle cx="199.1" cy="755.2" r="1.9" fill="#9c9c9c"/>
<circle cx="225.9" cy="754.4" r="1.9" fill="#9c9c9c"/>
<path d="M292.0 755.2L311.7 754.4" stroke="#8e8e8e" stroke-width="3.2" stroke-linecap="round"/>
<circle cx="292.0" cy="755.2" r="1.9" fill="#9c9c9c"/>
<circle cx="311.7" cy="754.4" r="1.9" fill="#9c9c9c"/>
<path d="M827.3 754.4L854.9 755.2" stroke="#8e8e8e" stroke-width="3.2" stroke-linecap="round"/>
<circle cx="827.3" cy="754.4" r="1.9" fill="#9c9c9c"/>
<circle cx="854.9" cy="755.2" r="1.9" fill="#9c9c9c"/>
<path d="M913.1 753.7L947.7 755.7" stroke="#8e8e8e" stroke-width="3.2" stroke-linecap="round"/>
<circle cx="913.1" cy="753.7" r="1.9" fill="#9c9c9c"/>
<circle cx="947.7" cy="755.7" r="1.9" fill="#9c9c9c"/>
<path d="M107.1 904.0L140.1 891.4" stroke="#8e8e8e" stroke-width="3.2" stroke-linecap="round"/>
<circle cx="107.1" cy="904.0" r="1.9" fill="#9c9c9c"/>
<circle cx="140.1" cy="891.4" r="1.9" fill="#9c9c9c"/>
<path d="M200.7 904.0L225.9 891.4" stroke="#8e8e8e" stroke-width="3.2" stroke-linecap="round"/>
<circle cx="200.7" cy="904.0" r="1.9" fill="#9c9c9c"/>
<circle cx="225.9" cy="891.4" r="1.9" fill="#9c9c9c"/>
<path d="M293.6 903.2L312.5 891.4" stroke="#8e8e8e" stroke-width="3.2" stroke-linecap="round"/>
<circle cx="293.6" cy="903.2" r="1.9" fill="#9c9c9c"/>
<circle cx="312.5" cy="891.4" r="1.9" fill="#9c9c9c"/>
<path d="M387.7 904.0L398.7 890.6" stroke="#8e8e8e" stroke-width="3.2" stroke-linecap="round"/>
<circle cx="387.7" cy="904.0" r="1.9" fill="#9c9c9c"/>
<circle cx="398.7" cy="890.6" r="1.9" fill="#9c9c9c"/>
<path d="M480.5 904.0L484.5 890.6" stroke="#8e8e8e" stroke-width="3.2" stroke-linecap="round"/>
<circle cx="480.5" cy="904.0" r="1.9" fill="#9c9c9c"/>
<circle cx="484.5" cy="890.6" r="1.9" fill="#9c9c9c"/>
<path d="M575.4 904.7L569.0 890.6" stroke="#8e8e8e" stroke-width="3.2" stroke-linecap="round"/>
<circle cx="575.4" cy="904.7" r="1.9" fill="#9c9c9c"/>
<circle cx="569.0" cy="890.6" r="1.9" fill="#9c9c9c"/>
<path d="M669.0 904.7L655.7 890.6" stroke="#8e8e8e" stroke-width="3.2" stroke-linecap="round"/>
<circle cx="669.0" cy="904.7" r="1.9" fill="#9c9c9c"/>
<circle cx="655.7" cy="890.6" r="1.9" fill="#9c9c9c"/>
<path d="M762.7 904.0L742.2 890.6" stroke="#8e8e8e" stroke-width="3.2" stroke-linecap="round"/>
<circle cx="762.7" cy="904.0" r="1.9" fill="#9c9c9c"/>
<circle cx="742.2" cy="890.6" r="1.9" fill="#9c9c9c"/>
<path d="M854.9 904.0L828.9 891.4" stroke="#8e8e8e" stroke-width="3.2" stroke-linecap="round"/>
<circle cx="854.9" cy="904.0" r="1.9" fill="#9c9c9c"/>
<circle cx="828.9" cy="891.4" r="1.9" fill="#9c9c9c"/>
<path d="M947.7 904.0L915.5 891.4" stroke="#8e8e8e" stroke-width="3.2" stroke-linecap="round"/>
<circle cx="947.7" cy="904.0" r="1.9" fill="#9c9c9c"/>
<circle cx="915.5" cy="891.4" r="1.9" fill="#9c9c9c"/>
<circle cx="173.2" cy="781.5" r="4.5" fill="#585858"/>
<circle cx="174.4" cy="772.9" r="1.9" fill="#828282"/>
<circle cx="164.5" cy="783.2" r="1.9" fill="#828282"/>
<circle cx="177.8" cy="790.4" r="1.9" fill="#828282"/>
<circle cx="146.4" cy="794.1" r="4.5" fill="#585858"/>
<circle cx="147.6" cy="785.5" r="1.9" fill="#828282"/>
<circle cx="137.7" cy="795.8" r="1.9" fill="#828282"/>
<circle cx="151.0" cy="803.0" r="1.9" fill="#828282"/>
<circle cx="172.4" cy="822.9" r="4.5" fill="#585858"/>
<circle cx="173.6" cy="814.3" r="1.9" fill="#828282"/>
<circle cx="163.7" cy="824.6" r="1.9" fill="#828282"/>
<circle cx="177.0" cy="831.8" r="1.9" fill="#828282"/>
<circle cx="149.1" cy="834.7" r="4.5" fill="#585858"/>
<circle cx="150.3" cy="826.1" r="1.9" fill="#828282"/>
<circle cx="140.4" cy="836.4" r="1.9" fill="#828282"/>
<circle cx="153.7" cy="843.6" r="1.9" fill="#828282"/>
<rect x="179.0" y="755.0" width="5.0" height="5.5" fill="none" stroke="#8a8a8a" stroke-width="1.2"/>
<rect x="147.8" y="874.0" width="13.0" height="10.5" fill="none" stroke="#b0b0b0" stroke-width="1.2"/>
<path d="M151.2 874v-3.500h6v3.500" fill="none" stroke="#b0b0b0" stroke-width="1.300"/>
<rect x="149.7" y="881.0" width="2.0" height="2.0" fill="#ddd"/>
<rect x="156.7" y="881.0" width="2.0" height="2.0" fill="#ddd"/>
<rect x="169.8" y="874.0" width="13.0" height="10.5" fill="none" stroke="#b0b0b0" stroke-width="1.2"/>
<path d="M173.2 874v-3.500h6v3.500" fill="none" stroke="#b0b0b0" stroke-width="1.300"/>
<rect x="171.7" y="881.0" width="2.0" height="2.0" fill="#ddd"/>
<rect x="178.7" y="881.0" width="2.0" height="2.0" fill="#ddd"/>
<g transform="translate(243.200 764.300) rotate(38)"><rect x="-12" y="-5.500" width="24" height="11" fill="#9a9a9a"/><circle cx="5" cy="0" r="2.200" fill="#4a4a4a"/><circle cx="-.5" cy="0" r="2.200" fill="#4a4a4a"/></g>
<path d="M219.600 778h7.900v8.700h-7.900" fill="none" stroke="#9a9a9a" stroke-width="1.500"/>
<g transform="translate(242 807.600) rotate(-32)"><rect x="-15" y="-13.500" width="30" height="27" fill="#6a6a6a"/><rect x="-15" y="9" width="30" height="4.500" fill="#8e8e8e"/><rect x="-7" y="-11" width="13" height="10" fill="#b8b8b8"/><rect x="0" y="-3" width="9" height="9" fill="#a6a6a6"/><rect x="6" y="-7" width="3" height="8" fill="#3c3c3c"/></g>
<g transform="translate(283 811.500) rotate(32)"><rect x="-15" y="-13.500" width="30" height="27" fill="#6a6a6a"/><rect x="-15" y="9" width="30" height="4.500" fill="#8e8e8e"/><rect x="-8" y="-12" width="14" height="6" fill="#8a8a8a"/><rect x="-6" y="-4" width="11" height="8" fill="#c0c0c0"/><rect x="-2" y="-2" width="4" height="4" fill="#444"/></g>
<circle cx="260.0" cy="808.5" r="2" fill="#aaa"/>
<circle cx="284.5" cy="826.5" r="2" fill="#aaa"/>
<circle cx="299.0" cy="798.0" r="2.2" fill="#9a9a9a"/>
<path d="M255.500 781c4-6 10-8.500 16-7l10 1.500 1.500 4-9.500 3-7 7.500-6-1z" fill="#ababab"/>
<rect x="284.1" y="771.0" width="15.9" height="12.6" fill="#b2b2b2"/>
<rect x="211.0" y="857.0" width="18.0" height="14.7" fill="#6a6a6a"/>
<rect x="225.2" y="859.0" width="3.0" height="3.5" fill="#d8d8d8"/>
<rect x="225.2" y="866.0" width="3.0" height="3.5" fill="#d8d8d8"/>
<rect x="234.6" y="857.0" width="18.0" height="14.7" fill="#6a6a6a"/>
<rect x="248.8" y="859.0" width="3.0" height="3.5" fill="#d8d8d8"/>
<rect x="248.8" y="866.0" width="3.0" height="3.5" fill="#d8d8d8"/>
<rect x="259.0" y="857.0" width="18.0" height="14.7" fill="#6a6a6a"/>
<rect x="273.2" y="859.0" width="3.0" height="3.5" fill="#d8d8d8"/>
<rect x="273.2" y="866.0" width="3.0" height="3.5" fill="#d8d8d8"/>
<rect x="279.4" y="855.6" width="21.3" height="16.1" fill="#919191"/>
<rect x="299.0" y="771.0" width="463.0" height="12.6" fill="#9c9c9c"/>
<rect x="601.4" y="771.0" width="133.8" height="12.6" fill="#979797"/>
<circle cx="321.5" cy="777.3" r="1.7" fill="#4a4a4a"/>
<circle cx="372.7" cy="777.3" r="1.7" fill="#4a4a4a"/>
<circle cx="424.7" cy="777.3" r="1.7" fill="#4a4a4a"/>
<circle cx="614.0" cy="777.3" r="1.7" fill="#4a4a4a"/>
<rect x="740.0" y="771.0" width="22.0" height="12.6" fill="#a6a6a6"/>
<rect x="300.0" y="757.6" width="40.0" height="39.4" fill="none" stroke="#8a8a8a" stroke-width="1.8"/>
<rect x="300.0" y="783.6" width="40.0" height="2.4" fill="#8a8a8a"/>
<circle cx="306.0" cy="777.5" r="2" fill="#3a3a3a"/>
<circle cx="312.0" cy="777.5" r="2" fill="#3a3a3a"/>
<circle cx="318.0" cy="777.5" r="2" fill="#3a3a3a"/>
<circle cx="324.0" cy="777.5" r="2" fill="#3a3a3a"/>
<rect x="302.0" y="760.0" width="36.0" height="8.5" fill="#3c3c3c"/>
<rect x="302.0" y="786.5" width="36.0" height="8.5" fill="#4a4a4a"/>
<path d="M320.0 756.8L414.4 756.8" stroke="#9a9a9a" stroke-width="2.2"/>
<rect x="388.0" y="752.5" width="12.0" height="3.5" fill="#c0c0c0"/>
<rect x="410.5" y="756.0" width="3.9" height="89.7" fill="#7c7c7c"/>
<rect x="372.0" y="841.8" width="42.4" height="4.7" fill="#7c7c7c"/>
<rect x="325.5" y="797.7" width="7.1" height="85.8" fill="#a6a6a6"/>
<rect x="325.5" y="875.6" width="22.8" height="7.9" fill="#a6a6a6"/>
<rect x="355.4" y="845.7" width="7.1" height="26.8" fill="#a6a6a6"/>
<rect x="385.3" y="788.3" width="6.3" height="95.2" fill="#a6a6a6"/>
<rect x="369.6" y="875.6" width="22.0" height="7.9" fill="#a6a6a6"/>
<rect x="320.0" y="793.0" width="56.7" height="4.0" fill="#8a8a8a"/>
<rect x="344.4" y="797.0" width="3.1" height="48.7" fill="#7e7e7e"/>
<rect x="360.0" y="797.0" width="3.3" height="48.7" fill="#7e7e7e"/>
<rect x="371.0" y="797.0" width="3.3" height="48.7" fill="#7e7e7e"/>
<circle cx="353.8" cy="787.5" r="2.7" fill="#8c8c8c"/>
<circle cx="353.8" cy="797.0" r="2.7" fill="#8c8c8c"/>
<circle cx="353.8" cy="804.0" r="2.7" fill="#8c8c8c"/>
<circle cx="353.8" cy="812.0" r="2.7" fill="#8c8c8c"/>
<circle cx="353.8" cy="819.0" r="2.7" fill="#8c8c8c"/>
<circle cx="352.5" cy="788.0" r="3.4" fill="#7a7a7a"/>
<rect x="344.4" y="825.3" width="22.8" height="22.0" fill="#9c9c9c"/>
<rect x="350.0" y="832.0" width="10.0" height="10.0" fill="#b4b4b4"/>
<rect x="367.0" y="845.7" width="5.7" height="4.0" fill="#e6e6e6"/>
<circle cx="350.0" cy="853.5" r="2.2" fill="#8a8a8a"/>
<circle cx="328.0" cy="844.0" r="2" fill="#bdbdbd"/>
<circle cx="358.0" cy="861.0" r="1.8" fill="#bdbdbd"/>
<circle cx="388.5" cy="876.0" r="2" fill="#bdbdbd"/>
<g transform="translate(399.5 792.0) rotate(-30)"><ellipse rx="6.0" ry="7.8" fill="#d2d2d2"/><ellipse rx="3.7" ry="4.9" cx="1.3" fill="#8c8c8c"/><ellipse rx="1.7" ry="2.2" fill="#bdbdbd"/><rect x="-2.0" y="-10.3" width="4.0" height="4" fill="#b4b4b4"/></g>
<g transform="translate(400.0 827.5) rotate(0)"><ellipse rx="6.9" ry="6.0" fill="#d2d2d2"/><ellipse rx="4.3" ry="3.7" cx="1.5" fill="#8c8c8c"/><ellipse rx="2.0" ry="1.7" fill="#bdbdbd"/><rect x="-2.3" y="-8.5" width="4.6" height="4" fill="#b4b4b4"/></g>
<g transform="translate(355.5 886.5) rotate(20)"><ellipse rx="7.8" ry="6.4" fill="#d2d2d2"/><ellipse rx="4.9" ry="4.0" cx="1.7" fill="#8c8c8c"/><ellipse rx="2.2" ry="1.8" fill="#bdbdbd"/><rect x="-2.6" y="-8.9" width="5.2" height="4" fill="#b4b4b4"/></g>
<rect x="415.2" y="785.0" width="7.1" height="15.0" fill="#555"/>
<rect x="395.5" y="847.3" width="14.2" height="4.7" fill="#555"/>
<circle cx="417.5" cy="809.0" r="2" fill="#8a8a8a"/>
<circle cx="442.0" cy="790.0" r="2" fill="#8a8a8a"/>
<circle cx="470.0" cy="763.0" r="2" fill="#8a8a8a"/>
<circle cx="524.0" cy="796.0" r="1.8" fill="#8a8a8a"/>
<circle cx="554.5" cy="789.0" r="1.8" fill="#8a8a8a"/>
<circle cx="483.0" cy="754.5" r="2" fill="#8a8a8a"/>
<path d="M424.7 755.2L448.3 755.2" stroke="#b0b0b0" stroke-width="2"/>
<path d="M424.7 764.3L448.3 764.3" stroke="#b0b0b0" stroke-width="1.8"/>
<path d="M449.0 752.9L449.0 800.0" stroke="#8a8a8a" stroke-width="1.2"/>
<path d="M456.9 789.9L483.7 789.9" stroke="#b0b0b0" stroke-width="1.8"/>
<path d="M456.9 798.5L483.7 797.5" stroke="#b0b0b0" stroke-width="1.8"/>
<path d="M449.0 800.5L484.0 800.5" stroke="#777" stroke-width="1"/>
<rect x="450.6" y="773.3" width="5.5" height="8.7" fill="#e6e6e6"/>
<rect x="452.0" y="775.5" width="2.7" height="4.0" fill="#444"/>
<rect x="494.7" y="754.4" width="39.3" height="37.8" fill="none" stroke="#7a7a7a" stroke-width="1.2"/>
<rect x="519.9" y="763.0" width="3.1" height="13.5" fill="#ececec"/>
<rect x="489.2" y="760.7" width="3.9" height="7.9" fill="#b4b4b4"/>
<rect x="496.0" y="792.5" width="18.0" height="3.5" fill="#5a5a5a"/>
<rect x="465.6" y="817.4" width="20.4" height="14.9" fill="#8d8d8d"/>
<rect x="504.9" y="818.2" width="15.0" height="13.4" fill="#686868"/>
<rect x="535.6" y="818.2" width="15.7" height="13.4" fill="#686868"/>
<rect x="540.0" y="818.2" width="11.0" height="13.4" fill="#686868"/>
<path d="M541 835.400H427V863.900H541" stroke="#585858" stroke-width="3.800"/>
<rect x="431.6" y="841.6" width="19.0" height="16.1" fill="none" stroke="#c4c4c4" stroke-width="1.2"/>
<rect x="433.0" y="844.0" width="6.8" height="11.3" fill="#7c7c7c"/>
<rect x="441.8" y="843.0" width="7.3" height="13.3" fill="#9a9a9a"/>
<path d="M450.6 844.8L464.8 844.8" stroke="#c4c4c4" stroke-width="1.8"/>
<path d="M450.6 854.5L464.8 854.5" stroke="#c4c4c4" stroke-width="1.8"/>
<rect x="475.6" y="841.6" width="19.1" height="16.1" fill="none" stroke="#c4c4c4" stroke-width="1.2"/>
<rect x="477.0" y="844.0" width="6.8" height="11.3" fill="#7c7c7c"/>
<rect x="485.8" y="843.0" width="7.3" height="13.3" fill="#9a9a9a"/>
<path d="M494.7 844.8L508.9 844.8" stroke="#c4c4c4" stroke-width="1.8"/>
<path d="M494.7 854.5L508.9 854.5" stroke="#c4c4c4" stroke-width="1.8"/>
<rect x="564.0" y="842.5" width="8.5" height="14.0" fill="none" stroke="#b4b4b4" stroke-width="1.2"/>
<rect x="573.5" y="843.5" width="8.5" height="12.0" fill="none" stroke="#a8a8a8" stroke-width="1.2"/>
<rect x="614.6" y="841.6" width="18.5" height="16.1" fill="none" stroke="#bcbcbc" stroke-width="1.2"/>
<rect x="616.0" y="844.0" width="6.6" height="11.3" fill="#7c7c7c"/>
<rect x="624.5" y="843.0" width="7.1" height="13.3" fill="#9a9a9a"/>
<path d="M633.1 844.8L647.0 844.8" stroke="#bcbcbc" stroke-width="1.8"/>
<path d="M633.1 854.5L647.0 854.5" stroke="#bcbcbc" stroke-width="1.8"/>
<rect x="601.4" y="757.6" width="133.8" height="3.9" fill="#6e6e6e"/>
<rect x="731.2" y="757.6" width="4.0" height="51.9" fill="#6e6e6e"/>
<rect x="713.0" y="805.6" width="22.2" height="3.9" fill="#6e6e6e"/>
<rect x="712.3" y="808.0" width="4.0" height="18.8" fill="#6e6e6e"/>
<rect x="624.2" y="823.7" width="92.1" height="3.9" fill="#6e6e6e"/>
<rect x="616.3" y="790.6" width="10.3" height="35.4" fill="#5c5c5c"/>
<rect x="601.4" y="761.5" width="3.1" height="30.5" fill="#6e6e6e"/>
<rect x="601.4" y="789.0" width="18.6" height="3.5" fill="#6e6e6e"/>
<rect x="606.9" y="763.0" width="29.1" height="8.0" fill="#d4d4d4"/>
<rect x="625.0" y="760.5" width="9.0" height="11.5" fill="#e0e0e0"/>
<rect x="629.7" y="785.6" width="10.3" height="34.9" fill="#b2b2b2"/>
<path d="M630.2 790.0L639.5 790.0" stroke="#8a8a8a" stroke-width="1"/>
<path d="M630.2 795.0L639.5 795.0" stroke="#8a8a8a" stroke-width="1"/>
<path d="M630.2 800.0L639.5 800.0" stroke="#8a8a8a" stroke-width="1"/>
<path d="M630.2 805.0L639.5 805.0" stroke="#8a8a8a" stroke-width="1"/>
<path d="M630.2 810.0L639.5 810.0" stroke="#8a8a8a" stroke-width="1"/>
<path d="M630.2 815.0L639.5 815.0" stroke="#8a8a8a" stroke-width="1"/>
<rect x="672.2" y="785.6" width="9.4" height="34.9" fill="#b2b2b2"/>
<path d="M672.7 790.0L681.1 790.0" stroke="#8a8a8a" stroke-width="1"/>
<path d="M672.7 795.0L681.1 795.0" stroke="#8a8a8a" stroke-width="1"/>
<path d="M672.7 800.0L681.1 800.0" stroke="#8a8a8a" stroke-width="1"/>
<path d="M672.7 805.0L681.1 805.0" stroke="#8a8a8a" stroke-width="1"/>
<path d="M672.7 810.0L681.1 810.0" stroke="#8a8a8a" stroke-width="1"/>
<path d="M672.7 815.0L681.1 815.0" stroke="#8a8a8a" stroke-width="1"/>
<rect x="660.4" y="785.0" width="10.2" height="37.9" fill="#aaa"/>
<rect x="699.7" y="785.0" width="10.3" height="37.0" fill="#aaa"/>
<g transform="translate(648.0 790.0) rotate(22)"><ellipse rx="5.1" ry="11.0" fill="#d2d2d2"/><ellipse rx="3.2" ry="6.9" cx="1.1" fill="#8c8c8c"/><ellipse rx="1.4" ry="3.2" fill="#bdbdbd"/><rect x="-1.7" y="-13.5" width="3.4" height="4" fill="#b4b4b4"/></g>
<g transform="translate(689.0 790.0) rotate(22)"><ellipse rx="5.1" ry="11.0" fill="#d2d2d2"/><ellipse rx="3.2" ry="6.9" cx="1.1" fill="#8c8c8c"/><ellipse rx="1.4" ry="3.2" fill="#bdbdbd"/><rect x="-1.7" y="-13.5" width="3.4" height="4" fill="#b4b4b4"/></g>
<rect x="715.5" y="789.0" width="12.5" height="9.5" fill="#bdbdbd"/>
<rect x="721.0" y="773.3" width="7.0" height="26.7" fill="#8e8e8e"/>
<circle cx="555.0" cy="788.3" r="2.3" fill="#8e8e8e"/>
<circle cx="574.6" cy="787.5" r="2.3" fill="#8e8e8e"/>
<rect x="595.9" y="785.0" width="7.1" height="4.9" fill="#b4b4b4"/>
<circle cx="607.7" cy="796.0" r="2" fill="#8a8a8a"/>
<rect x="558.0" y="797.7" width="12.7" height="6.3" fill="#9c9c9c" rx="2"/>
<rect x="580.0" y="797.7" width="13.5" height="6.3" fill="#9c9c9c" rx="2"/>
<rect x="580.5" y="822.0" width="9.5" height="8.5" fill="none" stroke="#8c8c8c" stroke-width="1.4"/>
<circle cx="585.0" cy="817.5" r="1.7" fill="#ccc"/>
<rect x="581.0" y="827.5" width="3.0" height="2.5" fill="#ccc"/>
<rect x="586.5" y="827.5" width="3.0" height="2.5" fill="#ccc"/>
<rect x="567.5" y="752.0" width="8.0" height="4.5" fill="#8a8a8a"/>
<rect x="654.0" y="752.0" width="13.5" height="4.0" fill="#8e8e8e"/>
<rect x="740.8" y="752.0" width="21.2" height="5.6" fill="#a2a2a2" rx="1.5"/>
<rect x="766.0" y="745.0" width="10.2" height="21.2" fill="#a6a6a6"/>
<g transform="translate(771.400 777.300) rotate(-32)"><rect x="-7.800" y="-6.800" width="15.600" height="13.600" rx="2" fill="#b2b2b2"/><rect x="-1.200" y="-1.200" width="2.400" height="2.400" fill="#4a4a4a"/></g>
<rect x="783.3" y="754.4" width="13.4" height="19.6" fill="none" stroke="#9a9a9a" stroke-width="1.3"/>
<path d="M787.7 755.0L787.7 774.0" stroke="#8a8a8a" stroke-width="0.9"/>
<path d="M792.2 755.0L792.2 774.0" stroke="#8a8a8a" stroke-width="0.9"/>
<path d="M783.5 761.0L796.5 761.0" stroke="#8a8a8a" stroke-width="0.9"/>
<path d="M783.5 767.5L796.5 767.5" stroke="#8a8a8a" stroke-width="0.9"/>
<rect x="740.8" y="789.0" width="47.2" height="43.5" fill="none" stroke="#686868" stroke-width="1.3"/>
<rect x="746.5" y="800.0" width="3.5" height="7.0" fill="#c9c9c9"/>
<circle cx="759.0" cy="803.5" r="1.9" fill="#b4b4b4"/>
<path d="M744.5 799.0L752.5 799.0" stroke="#8a8a8a" stroke-width="1"/>
<rect x="746.5" y="818.0" width="3.5" height="7.0" fill="#c9c9c9"/>
<circle cx="759.0" cy="821.5" r="1.9" fill="#b4b4b4"/>
<path d="M744.5 817.0L752.5 817.0" stroke="#8a8a8a" stroke-width="1"/>
<path d="M782.500 802v22" stroke="#a6a6a6" stroke-width="3" stroke-dasharray="3 1.500"/>
<rect x="540.0" y="833.4" width="379.4" height="4.0" fill="#585858"/>
<rect x="540.0" y="861.9" width="379.4" height="4.0" fill="#585858"/>
<rect x="915.8" y="745.0" width="3.2" height="92.4" fill="#5a5a5a"/>
<rect x="915.8" y="861.9" width="3.2" height="32.6" fill="#5a5a5a"/>
<path d="M821.5 755.0L821.5 833.0" stroke="#6c6c6c" stroke-width="1.2"/>
<path d="M821.0 755.2L916.0 755.2" stroke="#6c6c6c" stroke-width="1"/>
<rect x="828.0" y="770.0" width="6.4" height="15.0" fill="#575757"/>
<rect x="828.0" y="788.0" width="6.4" height="14.4" fill="#575757"/>
<rect x="828.0" y="805.6" width="6.4" height="14.9" fill="#575757"/>
<circle cx="861.2" cy="784.3" r="4.5" fill="#606060"/>
<circle cx="862.4" cy="775.7" r="1.9" fill="#828282"/>
<circle cx="852.5" cy="786.0" r="1.9" fill="#828282"/>
<circle cx="865.8" cy="793.2" r="1.9" fill="#828282"/>
<circle cx="889.5" cy="783.6" r="4.5" fill="#606060"/>
<circle cx="890.7" cy="775.0" r="1.9" fill="#828282"/>
<circle cx="880.8" cy="785.3" r="1.9" fill="#828282"/>
<circle cx="894.1" cy="792.5" r="1.9" fill="#828282"/>
<circle cx="852.0" cy="814.2" r="4.5" fill="#606060"/>
<circle cx="853.2" cy="805.6" r="1.9" fill="#828282"/>
<circle cx="843.3" cy="815.9" r="1.9" fill="#828282"/>
<circle cx="856.6" cy="823.1" r="1.9" fill="#828282"/>
<circle cx="882.9" cy="813.9" r="4.5" fill="#606060"/>
<circle cx="884.1" cy="805.3" r="1.9" fill="#828282"/>
<circle cx="874.2" cy="815.6" r="1.9" fill="#828282"/>
<circle cx="887.5" cy="822.8" r="1.9" fill="#828282"/>
</g></svg>
<div class="abs" style="left:321.5px;top:637.2px;width:97px;height:25.2px;background:#3e3e3e;border-radius:0px;"></div>
<div class="t " style="left:325.8px;top:639px;font-size:23px;font-weight:700;color:#ececec;letter-spacing:0.15px;">CMP-01</div>
<div class="abs" style="left:241.5px;top:687.6px;width:98.5px;height:25.9px;background:#3e3e3e;border-radius:0px;"></div>
<div class="t " style="left:245.8px;top:691px;font-size:23px;font-weight:700;color:#ececec;letter-spacing:0.15px;">CMP-04</div>
<div class="abs" style="left:288.2px;top:641.7px;width:22.2px;height:22.2px;border-radius:50%;background:#e63e3b"></div>
<div class="abs" style="left:208.9px;top:692.8px;width:22.2px;height:22.2px;border-radius:50%;background:#e63e3b"></div>
<!-- MAINTENANCE SCHEDULE -->
<div class="t " style="left:1015.4px;top:452px;font-size:29.5px;font-weight:700;color:#e3e3e3;letter-spacing:0.58px;">Maintenance Schedule</div>
<div class="t " style="left:1038px;top:500px;font-size:21px;font-weight:700;color:#e6e6e6;letter-spacing:0.6px;">Asset</div>
<div class="t " style="left:1158.6px;top:500px;font-size:21px;font-weight:700;color:#e6e6e6;letter-spacing:0.6px;">Work Request</div>
<div class="t " style="left:1350.4px;top:500px;font-size:21px;font-weight:700;color:#e6e6e6;letter-spacing:0.6px;">Work order</div>
<div class="t " style="left:1515.8px;top:500px;font-size:21px;font-weight:700;color:#e6e6e6;letter-spacing:0.6px;">Status</div>
<div class="t " style="left:1665.2px;top:500px;font-size:21px;font-weight:700;color:#e6e6e6;letter-spacing:0.6px;">Date</div>
<div class="abs" style="left:1017.7px;top:529.6px;width:857.3px;height:208.6px;background:#434343;border-radius:5px;"></div>
<div class="abs" style="left:1026.6px;top:540.2px;width:837.6px;height:32px;background:#b8675c;border-radius:4px;"></div>
<div class="t " style="left:1037.8px;top:546px;font-size:20.5px;font-weight:700;color:#f1e2de;letter-spacing:0.8px;">CMP-01</div>
<div class="t " style="left:1160.2px;top:546px;font-size:20.5px;font-weight:700;color:#f1e2de;letter-spacing:0.8px;">3453788</div>
<div class="t " style="left:1352.4px;top:546px;font-size:20.5px;font-weight:700;color:#f1e2de;letter-spacing:0.9px;">114879</div>
<div class="t " style="left:1515.8px;top:546px;font-size:20.5px;font-weight:700;color:#f1e2de;letter-spacing:1.1px;">PLANNED</div>
<div class="t " style="left:1666.2px;top:546px;font-size:20.5px;font-weight:700;color:#f1e2de;letter-spacing:0.8px;">2/10/24, 16:00PM</div>
<div class="abs" style="left:1026.6px;top:579.3000000000001px;width:837.6px;height:32px;background:#b8675c;border-radius:4px;"></div>
<div class="t " style="left:1037.8px;top:585px;font-size:20.5px;font-weight:700;color:#f1e2de;letter-spacing:0.8px;">CMP-04</div>
<div class="t " style="left:1160.2px;top:585px;font-size:20.5px;font-weight:700;color:#f1e2de;letter-spacing:0.8px;">3453789</div>
<div class="t " style="left:1352.4px;top:585px;font-size:20.5px;font-weight:700;color:#f1e2de;letter-spacing:0.9px;">114885</div>
<div class="t " style="left:1515.8px;top:585px;font-size:20.5px;font-weight:700;color:#f1e2de;letter-spacing:1.1px;">PLANNED</div>
<div class="t " style="left:1666.2px;top:585px;font-size:20.5px;font-weight:700;color:#f1e2de;letter-spacing:0.8px;">3/10/24, 10:00AM</div>
<div class="abs" style="left:1026.6px;top:618.4000000000001px;width:837.6px;height:32px;background:#2e2e2e;border-radius:4px;"></div>
<div class="t " style="left:1037.8px;top:624px;font-size:20.5px;font-weight:700;color:#eeeeee;letter-spacing:0.8px;">CMP-07</div>
<div class="t " style="left:1160.2px;top:624px;font-size:20.5px;font-weight:700;color:#eeeeee;letter-spacing:0.8px;">3453790</div>
<div class="t " style="left:1352.4px;top:624px;font-size:20.5px;font-weight:700;color:#eeeeee;letter-spacing:0.9px;">114889</div>
<div class="t " style="left:1515.8px;top:624px;font-size:20.5px;font-weight:700;color:#eeeeee;letter-spacing:1.1px;">PLANNED</div>
<div class="t " style="left:1666.2px;top:624px;font-size:20.5px;font-weight:700;color:#eeeeee;letter-spacing:0.8px;">3/10/24, 15:00PM</div>
<div class="abs" style="left:1026.6px;top:657.5px;width:837.6px;height:32px;background:#2e2e2e;border-radius:4px;"></div>
<div class="abs" style="left:1026.6px;top:696.6px;width:837.6px;height:32px;background:#2e2e2e;border-radius:4px;"></div>
<!-- ALERT TREND -->
<div class="t " style="left:1018px;top:799px;font-size:29.5px;font-weight:700;color:#e3e3e3;letter-spacing:0.58px;">Alert Trend</div>
<div class="t " style="left:1018.6px;top:845px;font-size:19px;font-weight:700;color:#e8e8e8;">4</div>
<div class="t " style="left:1018.6px;top:875px;font-size:19px;font-weight:700;color:#e8e8e8;">3</div>
<div class="t " style="left:1018.6px;top:906px;font-size:19px;font-weight:700;color:#e8e8e8;">2</div>
<div class="t " style="left:1018.6px;top:937px;font-size:19px;font-weight:700;color:#e8e8e8;">1</div>
<div class="t " style="left:1018.6px;top:967px;font-size:19px;font-weight:700;color:#e8e8e8;">0</div>
<div class="t " style="left:1043.5px;top:990px;font-size:19px;font-weight:700;color:#e8e8e8;letter-spacing:0.95px;">05AM</div>
<div class="t " style="left:1200px;top:990px;font-size:19px;font-weight:700;color:#e8e8e8;letter-spacing:0.95px;">08AM</div>
<div class="t " style="left:1356.6px;top:990px;font-size:19px;font-weight:700;color:#e8e8e8;letter-spacing:0.95px;">11AM</div>
<div class="t " style="left:1510.8px;top:990px;font-size:19px;font-weight:700;color:#e8e8e8;letter-spacing:0.95px;">14PM</div>
<div class="t " style="left:1664.6px;top:990px;font-size:19px;font-weight:700;color:#e8e8e8;letter-spacing:0.95px;">17PM</div>
<div class="t " style="left:1819.9px;top:991px;font-size:19px;font-weight:700;color:#e8e8e8;letter-spacing:0.95px;">19PM</div>
<svg class="abs" style="left:1030px;top:840px" width="860" height="160" viewBox="1030 840 860 160" fill="none"><path d="M1043.3 861.4H1871.2M1043.3 923H1871.2M1043.3 954.1H1871.2" stroke="#484848" stroke-width="1.4"/><path d="M1046.2 891.8H1871.2" stroke="#a5c2a0" stroke-width="1.9" stroke-dasharray="7.2 4.8"/><path d="M1054.1 933.7L1136.3 906.7L1190 940.9L1260.2 896.1L1348.1 884.2L1387.6 917.7L1477.1 900.7L1549 874.6L1598.6 869.8" stroke="#19a4e7" stroke-width="4" stroke-linejoin="miter"/></svg>
</body>
</html>
